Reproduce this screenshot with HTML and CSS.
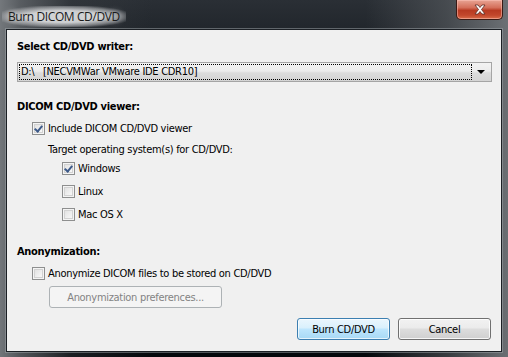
FILE: index.html
```html
<!DOCTYPE html>
<html>
<head>
    <meta charset="utf-8">
    <link rel="stylesheet" href="styles.css">
</head>
<body>
    <div class="window">
        <div class="titlebar">
            <span class="title">Burn DICOM CD/DVD</span>
            <div class="close">
                <svg width="14" height="11" viewBox="0 0 14 11">
                    <path d="M2 1 L5 1 L7 3.5 L9 1 L12 1 L8.5 5.5 L12 10 L9 10 L7 7.5 L5 10 L2 10 L5.5 5.5 Z" fill="#fff" stroke="#5a2a22" stroke-width="0.8"/>
                </svg>
            </div>
        </div>

        <div class="client">
            <div class="section-title">Select CD/DVD writer:</div>
            <div class="combo">
                <div class="combo-text"><span class="focus">D:\&nbsp;&nbsp;&nbsp;[NECVMWar VMware IDE CDR10]</span></div>
                <div class="combo-arrow"></div>
            </div>

            <div class="section-title second">DICOM CD/DVD viewer:</div>
            <div class="check-row indent-1 first-check">
                <span class="checkbox checked"></span>
                <span>Include DICOM CD/DVD viewer</span>
            </div>
            <div class="label indent-2">Target operating system(s) for CD/DVD:</div>
            <div class="check-row indent-3 windows">
                <span class="checkbox checked"></span>
                <span>Windows</span>
            </div>
            <div class="check-row indent-3 os">
                <span class="checkbox"></span>
                <span>Linux</span>
            </div>
            <div class="check-row indent-3 os">
                <span class="checkbox"></span>
                <span>Mac OS X</span>
            </div>

            <div class="section-title third">Anonymization:</div>
            <div class="check-row indent-1 first-check">
                <span class="checkbox"></span>
                <span>Anonymize DICOM files to be stored on CD/DVD</span>
            </div>
            <button class="btn prefs" disabled>Anonymization preferences...</button>

            <div class="actions">
                <button class="btn default">Burn CD/DVD</button>
                <button class="btn">Cancel</button>
            </div>
        </div>
    </div>
</body>
</html>
```

FILE: styles.css
```css
body {
    margin: 0;
    width: 508px;
    height: 357px;
    overflow: hidden;
    font-family: "DejaVu Sans Condensed", "DejaVu Sans", sans-serif;
    font-size: 11px;
    letter-spacing: -0.3px;
    color: #000;
}

.window {
    width: 508px;
    height: 357px;
    box-sizing: border-box;
    padding: 0 6px 5px 6px;
    display: flex;
    flex-direction: column;
    background:
        linear-gradient(to right, rgba(120, 124, 128, 0.95) 0%, rgba(100, 104, 108, 0.8) 4%, rgba(60, 64, 68, 0.4) 14%, rgba(0, 0, 0, 0) 30%, rgba(0, 0, 0, 0) 72%, rgba(90, 94, 98, 0.6) 88%, rgba(112, 116, 120, 0.95) 100%),
        linear-gradient(to bottom, #2a2f35 0%, #0b0f14 30%, #05080c 100%);
}

.titlebar {
    height: 29px;
    display: flex;
    align-items: flex-start;
    justify-content: space-between;
}

.title {
    margin-top: 6px;
    margin-left: -4px;
    padding: 2px 6px;
    font-family: "Open Sans", "DejaVu Sans", sans-serif;
    font-size: 12px;
    letter-spacing: -0.4px;
    color: #1a1a1a;
    background: radial-gradient(ellipse at center, rgba(215, 217, 219, 0.9) 40%, rgba(190, 192, 195, 0.5) 65%, rgba(0, 0, 0, 0) 80%);
    text-shadow: 0 0 6px #fff;
}

.close {
    margin-right: -1px;
    width: 47px;
    height: 20px;
    box-sizing: border-box;
    border: 1px solid #3b1a14;
    border-top: none;
    border-radius: 0 0 5px 5px;
    background: linear-gradient(to bottom, #e8a494 0%, #d46f5a 40%, #b83a22 55%, #c2472c 80%, #d96d4a 100%);
    box-shadow: inset 0 0 0 1px rgba(255, 200, 190, 0.5);
    display: flex;
    align-items: center;
    justify-content: center;
}

.client {
    flex: 1;
    background: #f0f0f0;
    border: 1px solid #1b1f24;
    box-shadow: 0 0 0 1px rgba(160, 165, 170, 0.5);
    padding: 10px 9px 0 10px;
    display: flex;
    flex-direction: column;
    align-items: flex-start;
}

.section-title {
    font-weight: bold;
    line-height: 14px;
    height: 14px;
}

.section-title.second {
    margin-top: 18px;
}

.section-title.third {
    margin-top: 24px;
}

.combo {
    margin-top: 8px;
    align-self: stretch;
    height: 20px;
    box-sizing: border-box;
    border: 1px solid #a5a5a5;
    background: linear-gradient(to bottom, #f3f3f3 0%, #ececec 45%, #dcdcdc 55%, #d4d4d4 100%);
    display: flex;
    align-items: stretch;
    padding: 1px;
}

.combo-text {
    flex: 1;
    border: 1px dotted #000;
    display: flex;
    align-items: center;
    padding-left: 1px;
    line-height: 14px;
}

.combo-arrow {
    width: 18px;
    position: relative;
}

.combo-arrow::after {
    content: "";
    position: absolute;
    left: 5px;
    top: 6px;
    border-left: 4px solid transparent;
    border-right: 4px solid transparent;
    border-top: 4px solid #000;
}

.check-row {
    display: flex;
    align-items: center;
    height: 13px;
    line-height: 13px;
    gap: 3px;
}

.first-check {
    margin-top: 8px;
}

.windows {
    margin-top: 5px;
}

.os {
    margin-top: 10px;
}

.indent-1 {
    margin-left: 15px;
}

.indent-2 {
    margin-left: 31px;
}

.indent-3 {
    margin-left: 45px;
}

.label {
    margin-top: 8px;
    line-height: 14px;
}

.checkbox {
    width: 13px;
    height: 13px;
    box-sizing: border-box;
    border: 1px solid #8e8f8f;
    background: linear-gradient(135deg, #dcdcdc 0%, #f4f4f4 70%, #fbfbfb 100%);
    box-shadow: inset 0 0 0 1px #f4f4f4, inset 0 0 0 2px #d2d2d2;
    position: relative;
    flex: none;
}

.checkbox.checked::after {
    content: "";
    position: absolute;
    left: 3px;
    top: 1px;
    width: 3px;
    height: 6px;
    border-right: 2px solid #3d5a89;
    border-bottom: 2px solid #3d5a89;
    transform: rotate(40deg);
}

.btn {
    font-family: inherit;
    font-size: 11px;
    letter-spacing: inherit;
    height: 22px;
    width: 93px;
    box-sizing: border-box;
    border: 1px solid #707070;
    border-radius: 3px;
    background: linear-gradient(to bottom, #f2f2f2 0%, #ebebeb 45%, #dddddd 50%, #cfcfcf 100%);
    box-shadow: inset 0 0 0 1px rgba(255, 255, 255, 0.8);
    color: #000;
    padding: 0;
}

.btn.prefs {
    margin-top: 6px;
    margin-left: 32px;
    width: 173px;
    border-color: #adb2b5;
    background: #f4f4f4;
    color: #838383;
    box-shadow: none;
}

.btn.default {
    border-color: #3c7fb1;
    background: linear-gradient(to bottom, #eaf6fd 0%, #d9f0fc 45%, #bee6fd 50%, #a7d9f5 100%);
    box-shadow: inset 0 0 0 1px rgba(255, 255, 255, 0.7);
}

.actions {
    margin-top: 10px;
    align-self: stretch;
    display: flex;
    justify-content: flex-end;
    gap: 8px;
    padding-right: 1px;
}
```
